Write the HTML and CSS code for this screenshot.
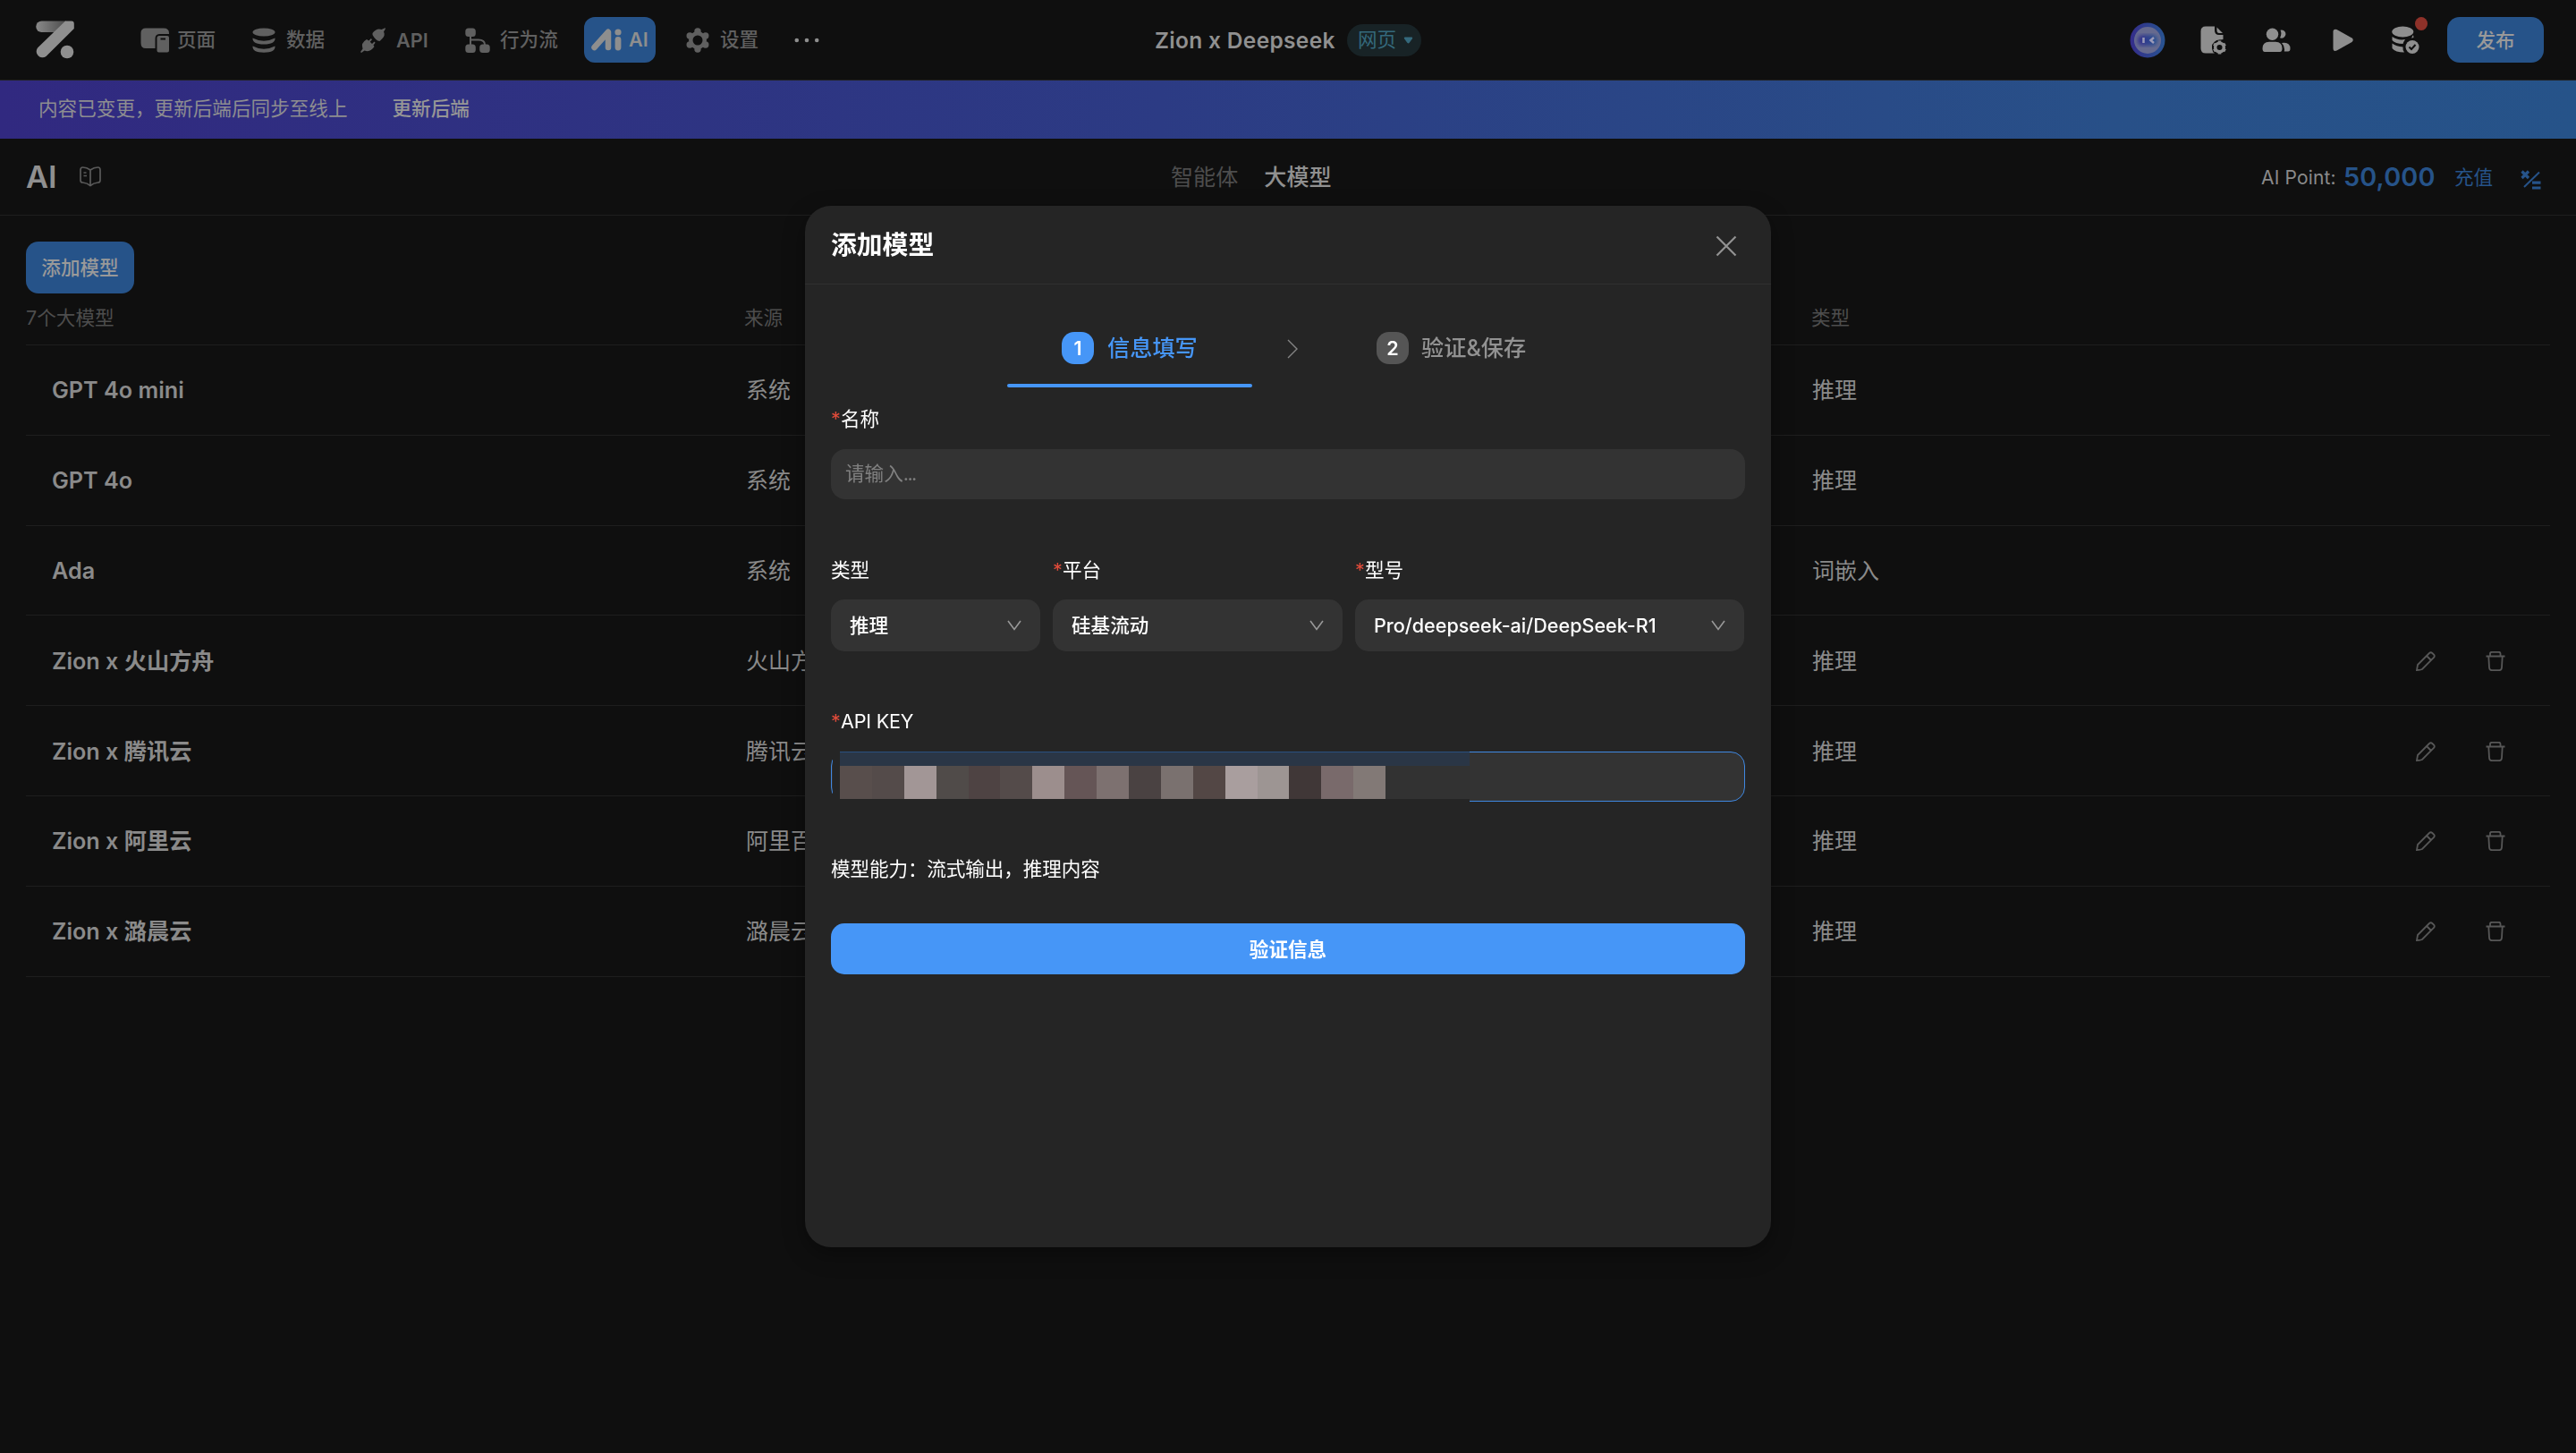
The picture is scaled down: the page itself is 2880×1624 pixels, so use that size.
FILE: index.html
```
<!DOCTYPE html>
<html lang="zh-CN">
<head>
    <meta charset="UTF-8">
    <meta name="viewport" content="width=device-width, initial-scale=1.0">
    <title>Zion x Deepseek</title>
    <link rel="stylesheet" href="styles.css">
</head>
<body>
    <svg class="sprite">
        <symbol id="pencil" viewBox="0 0 22 22">
            <path d="M1 21L2 15L15 2Q16.700 0.500 18.300 2L20 3.700Q21.500 5.300 20 7L7 20Q5 21 1 21ZM12 5L17 10"/>
        </symbol>
        <symbol id="trash" viewBox="0 0 22 22">
            <path d="M0.500 5.500H21.500M5 5.500V2.500Q5 0.800 7 0.800H14.500Q16.500 0.800 16.500 2.500V5.500M3.300 5.500L4 18Q4.200 21.200 7 21.200H15Q17.800 21.200 18 18L18.700 5.500"/>
        </symbol>
    </svg>

    <header class="topbar">
        <svg class="logo" viewBox="0 0 43 43">
            <defs>
                <linearGradient id="logoFade" x1="0" x2="1">
                    <stop offset="0" stop-color="#8a8a8a"/>
                    <stop offset="1" stop-color="#4c4c4c"/>
                </linearGradient>
            </defs>
            <path d="M6.500 0.500H34L22 13H6.500A6.200 6.200 0 0 1 6.500 0.500Z" fill="url(#logoFade)"/>
            <path d="M33 0.500H40Q42.800 0.500 42.800 3.500V9L11.500 40A6.800 6.800 0 0 1 2 30.500Z" fill="#8f8f8f"/>
            <circle cx="35" cy="35" r="7.300" fill="#8f8f8f"/>
        </svg>
        <nav class="nav">
            <div class="nav-item nav-page">
                <svg width="33" height="28" viewBox="0 0 33 28"><path d="M6 0.500H26Q32 0.500 32 6V7H21Q16.500 7.500 16.500 12V23H6Q0.500 23 0.500 17V6Q0.500 0.500 6 0.500Z"/><path fill-rule="evenodd" d="M21 9H30Q32 9 32 11V25.500Q32 27.500 30 27.500H20.500Q18.500 27.500 18.500 25.500V11.500Q18.500 9 21 9ZM22.500 11.500V13.500H28V11.500Z"/></svg>
                <span>页面</span>
            </div>
            <div class="nav-item nav-data">
                <svg width="26" height="28" viewBox="0 0 26 28"><ellipse cx="13" cy="5" rx="12.500" ry="4.500"/><path d="M0.500 11.500Q13 18 25.500 11.500Q26 18.500 13 18.500Q0 18.500 0.500 11.500ZM0.500 20.500Q13 27 25.500 20.500Q26 27.700 13 27.700Q0 27.700 0.500 20.500Z"/></svg>
                <span>数据</span>
            </div>
            <div class="nav-item nav-api">
                <svg width="28" height="28" viewBox="0 0 28 28"><path d="M27.500 0.300L28 1L26 4.500Q28 8.500 24.500 12L21.500 15Q17 14.500 13.500 8L13.500 6Q18 0 23.500 2ZM7 13L9.300 14.500L11.800 12L13 13.200L10.700 15.700L13 18L15.500 15.500L16.600 16.800L14.500 19.500L15.500 21Q11 28 4.500 25.500L1 28L0 27L2.500 23.500Q0 17 7 13Z"/></svg>
                <span>API</span>
            </div>
            <div class="nav-item nav-flow">
                <svg width="28" height="28" viewBox="0 0 28 28"><rect x="0.300" y="0.500" width="11.500" height="9.500" rx="3.500"/><rect x="0.300" y="18.500" width="11.500" height="9.500" rx="3.500"/><rect x="16.200" y="18.500" width="11.500" height="9.500" rx="3.500"/><path class="line" d="M6 9V19M6 13.500H15Q22 13.500 22 19"/></svg>
                <span>行为流</span>
            </div>
            <div class="nav-item nav-ai active">
                <svg width="34" height="25" viewBox="0 0 34 25"><path class="thick" d="M3.500 21L19 3.800V21"/><circle cx="30" cy="4" r="3.600"/><rect x="26.600" y="9" width="6.800" height="15.500" rx="3.400"/></svg>
                <span>AI</span>
            </div>
            <div class="nav-item nav-setting">
                <svg width="26" height="28" viewBox="0 0 26 28"><circle class="ring" cx="13" cy="14" r="8.500"/><circle cx="13" cy="4" r="3.700"/><circle cx="21.800" cy="9" r="3.700"/><circle cx="21.800" cy="19" r="3.700"/><circle cx="13" cy="24" r="3.700"/><circle cx="4.200" cy="19" r="3.700"/><circle cx="4.200" cy="9" r="3.700"/><circle class="hole" cx="13" cy="14" r="5.500"/></svg>
                <span>设置</span>
            </div>
            <svg class="more" width="28" height="6" viewBox="0 0 28 6"><circle cx="2.800" cy="3" r="2.300"/><circle cx="14" cy="3" r="2.300"/><circle cx="25.200" cy="3" r="2.300"/></svg>
        </nav>
        <div class="project">
            <span class="project-name">Zion x Deepseek</span>
            <div class="platform"><span>网页</span><svg width="11" height="8" viewBox="0 0 10 8"><path d="M1 0.500H9Q10.300 1 9.300 2.500L6.200 6.800Q5 8 3.800 6.800L0.700 2.500Q-0.300 1 1 0.500Z"/></svg></div>
        </div>
        <div class="tools">
            <svg class="robot" width="40" height="40" viewBox="0 0 40 40">
                <defs>
                    <linearGradient id="ring" x1="0" x2="1">
                        <stop offset="0" stop-color="#342c8a"/>
                        <stop offset="1" stop-color="#285491"/>
                    </linearGradient>
                    <filter id="soft"><feGaussianBlur stdDeviation="2"/></filter>
                </defs>
                <circle cx="20" cy="20" r="19.500" fill="url(#ring)"/>
                <circle cx="20" cy="20" r="15" fill="#666a8f"/>
                <rect x="9" y="14" width="22" height="12" rx="5.500" fill="url(#ring)" filter="url(#soft)"/>
                <path d="M15.500 17V23M27 17L23.500 20L27 23" fill="none" stroke="#9b9bb8" stroke-width="2.500"/>
            </svg>
            <svg class="doc" width="30" height="32" viewBox="0 0 30 32"><path d="M6 0.500H16V5Q16 10 21 10H25.500V15L20 16L13 21L14 29L16 30.500H6Q0.500 30.500 0.500 25V6Q0.500 0.500 6 0.500ZM18.500 1.500L25 8H21Q18.500 8 18.500 5Z"/><circle class="gap" cx="21.500" cy="24" r="8.500"/><circle class="cog" cx="21.500" cy="24" r="4.800"/><path class="teeth" d="M21.500 16.500V18.500M21.500 29.500V31.500M15 20.300L16.800 21.300M26.200 26.700L28 27.700M28 20.300L26.200 21.300M16.800 26.700L15 27.700"/></svg>
            <svg class="people" width="32" height="28" viewBox="0 0 32 28"><circle cx="11.500" cy="7.200" r="6.700"/><path d="M20.500 2.700A4.600 4.600 0 1 1 20 11.300Q22.500 6.500 20.500 2.700ZM0.500 23Q0.500 16 8 15.700H15Q22.500 16 22.500 23Q22.500 27 20 27H3Q0.500 27 0.500 23ZM22 17Q31.500 15.500 31.500 23.500Q31.500 26.500 29 26.500H24.800Q26 21 22 17Z"/></svg>
            <svg class="play" width="24" height="26" viewBox="0 0 24 26"><path d="M4.500 1L21.500 10.500Q24 12.500 21.500 15L4.500 24.500Q0.500 26 0.500 22V3.500Q0.500 0 4.500 1Z"/></svg>
            <div class="sync">
                <svg width="31" height="32" viewBox="0 0 31 32"><ellipse cx="12.300" cy="6.500" rx="12" ry="6"/><path d="M0.500 12Q7 16.500 15 15Q13 18 12.500 20Q4 20 0.500 16ZM0.500 19.500Q5 23 12.500 23.500Q12 27 14 29.500Q4 29.500 0.500 25ZM24 10L24.500 13L22 13.500Z"/><circle cx="23" cy="23.500" r="7.500"/><path class="check" d="M19.500 23.500L22 26L26.500 21"/></svg>
                <i class="dot"></i>
            </div>
            <button class="publish">发布</button>
        </div>
    </header>

    <div class="notice">
        <span>内容已变更，更新后端后同步至线上</span>
        <b>更新后端</b>
    </div>

    <div class="titlebar">
        <div class="page-title">
            <h1>AI</h1>
            <svg width="24" height="23" viewBox="0 0 24 23"><path d="M12 4Q8 1 3.500 1Q1 1 1 4V15.500Q1 18 3.500 18Q8.500 18.500 12 21.500Q15.500 18.500 20.500 18Q23 18 23 15.500V4Q23 1 20.500 1Q16 1 12 4ZM12 4V21.500M4.500 7H7.500M4.500 10.500H8"/></svg>
        </div>
        <div class="tabs">
            <span>智能体</span>
            <span class="active">大模型</span>
        </div>
        <div class="points">
            <span class="points-label">AI Point:</span>
            <span class="points-value">50,000</span>
            <span class="recharge">充值</span>
            <svg width="24" height="22" viewBox="0 0 24 22"><path class="bold" d="M1.500 1.500L9 9M9 1.500L1.500 9M13 14.200H22.500M13 20H22.500"/><path d="M21 2.500L4 19"/></svg>
        </div>
    </div>

    <main class="models">
        <button class="add">添加模型</button>
        <div class="row head"><span>7个大模型</span><span>来源</span><span>类型</span></div>
        <div class="row"><b>GPT 4o mini</b><span>系统</span><span>推理</span></div>
        <div class="row"><b>GPT 4o</b><span>系统</span><span>推理</span></div>
        <div class="row"><b>Ada</b><span>系统</span><span>词嵌入</span></div>
        <div class="row"><b>Zion x 火山方舟</b><span>火山方舟</span><span>推理</span><div class="actions"><svg><use href="#pencil"/></svg><svg><use href="#trash"/></svg></div></div>
        <div class="row"><b>Zion x 腾讯云</b><span>腾讯云</span><span>推理</span><div class="actions"><svg><use href="#pencil"/></svg><svg><use href="#trash"/></svg></div></div>
        <div class="row"><b>Zion x 阿里云</b><span>阿里百炼</span><span>推理</span><div class="actions"><svg><use href="#pencil"/></svg><svg><use href="#trash"/></svg></div></div>
        <div class="row"><b>Zion x 潞晨云</b><span>潞晨云</span><span>推理</span><div class="actions"><svg><use href="#pencil"/></svg><svg><use href="#trash"/></svg></div></div>
    </main>

    <div class="mask">
        <div class="modal">
            <div class="modal-head">
                <h2>添加模型</h2>
                <svg width="24" height="24" viewBox="0 0 24 24"><path d="M1.500 1.500L22.500 22.500M22.500 1.500L1.500 22.500"/></svg>
            </div>
            <div class="modal-body">
                <div class="steps">
                    <div class="step current"><i>1</i><span>信息填写</span></div>
                    <svg width="14" height="22" viewBox="0 0 14 22"><path d="M2 1L12 11L2 21"/></svg>
                    <div class="step"><i>2</i><span>验证&amp;保存</span></div>
                </div>

                <label><em>*</em>名称</label>
                <div class="input">请输入<span class="dots">...</span></div>

                <div class="fields">
                    <div class="field">
                        <label>类型</label>
                        <div class="select"><span>推理</span><svg viewBox="0 0 16 12"><path d="M1 1L8 10.500L15 1"/></svg></div>
                    </div>
                    <div class="field">
                        <label><em>*</em>平台</label>
                        <div class="select"><span>硅基流动</span><svg viewBox="0 0 16 12"><path d="M1 1L8 10.500L15 1"/></svg></div>
                    </div>
                    <div class="field">
                        <label><em>*</em>型号</label>
                        <div class="select"><span class="model-id">Pro/deepseek-ai/DeepSeek-R1</span><svg viewBox="0 0 16 12"><path d="M1 1L8 10.500L15 1"/></svg></div>
                    </div>
                </div>

                <label class="key-label"><em>*</em>API KEY</label>
                <div class="input focus">
                    <div class="mosaic">
                        <div class="mosaic-top"></div>
                        <div class="blocks">
                            <i class="c1"></i><i class="c2"></i><i class="c3"></i><i class="c4"></i><i class="c5"></i><i class="c2"></i><i class="c6"></i><i class="c7"></i><i class="c8"></i><i class="c9"></i><i class="c10"></i><i class="c11"></i><i class="c12"></i><i class="c13"></i><i class="c14"></i><i class="c15"></i><i class="c16"></i>
                        </div>
                    </div>
                </div>

                <p class="ability">模型能力：流式输出，推理内容</p>
                <button class="verify">验证信息</button>
            </div>
        </div>
    </div>
</body>
</html>
```
FILE: styles.css
```
* {
    box-sizing: border-box;
}
body {
    margin: 0;
    height: 1624px;
    overflow: hidden;
    background: #0f0f0f;
    color: #8a8a8a;
    font-family: Inter, "Noto Sans CJK SC", sans-serif;
    font-size: 21.6px;
    line-height: 30px;
}
svg {
    display: block;
    flex: none;
    fill: none;
}
button {
    border: none;
    padding: 0 0 3px;
    font-family: inherit;
    font-size: 21.6px;
    font-weight: 500;
}
h1, h2, p {
    margin: 0;
}
i, em {
    font-style: normal;
}
span, b, label {
    white-space: nowrap;
}
.sprite {
    display: none;
}

/* top bar */
.topbar {
    display: grid;
    grid-template-columns: 1291px 1fr 499px;
    align-items: center;
    height: 90px;
    border-bottom: 1px solid #222;
}
.logo {
    width: 43px;
    height: 43px;
    margin-left: 40px;
    grid-area: 1 / 1;
}
.nav {
    grid-area: 1 / 1;
    display: flex;
    align-items: center;
    padding-left: 157px;
}
.nav-item {
    display: flex;
    align-items: center;
    flex: none;
    color: #606060;
    font-weight: 500;
}
.nav-item span {
    padding-bottom: 2px;
}
.nav-item svg, .more {
    fill: currentColor;
}
.nav-item .line {
    fill: none;
    stroke: currentColor;
    stroke-width: 2;
}
.nav-item .thick {
    fill: none;
    stroke: currentColor;
    stroke-width: 6.5;
    stroke-linecap: round;
    stroke-linejoin: round;
}
.nav-item .ring {
    stroke: currentColor;
    stroke-width: 3;
}
.nav-item .hole {
    fill: #0f0f0f;
}
.nav-page {
    width: 125px;
    gap: 8px;
}
.nav-data {
    width: 121px;
    gap: 12px;
}
.nav-api {
    width: 117px;
    gap: 12px;
    font-weight: 600;
}
.nav-api span {
    padding-bottom: 0;
}
.nav-flow {
    width: 133px;
    gap: 11px;
}
.nav-ai {
    width: 80px;
    height: 51px;
    padding-left: 8px;
    gap: 8px;
    border-radius: 12px;
    background: #265389;
    font-weight: 600;
}
.nav-ai span {
    padding-bottom: 1px;
}
.nav-ai.active {
    color: #8e8e8e;
}
.nav-setting {
    width: 121px;
    margin-left: 34px;
    gap: 12px;
}
.more {
    color: #8e8e8e;
}
.project {
    grid-area: 1 / 2;
    display: flex;
    align-items: center;
}
.project-name {
    width: 215px;
    font-size: 24.5px;
    font-weight: 600;
    letter-spacing: 0.32px;
    color: #909090;
}
.platform {
    display: flex;
    align-items: center;
    gap: 8px;
    width: 83px;
    height: 36px;
    padding-left: 12px;
    border-radius: 18px;
    background: #182326;
    color: #34697c;
}
.platform span {
    padding-bottom: 2px;
}
.platform svg {
    fill: currentColor;
}
.tools {
    grid-area: 1 / 3;
    display: flex;
    align-items: center;
}
.tools svg:not(.robot) {
    fill: #8e8e8e;
}
.doc {
    margin-left: 39px;
}
.tools .gap {
    fill: #0f0f0f;
}
.tools .cog {
    fill: none;
    stroke: #8e8e8e;
    stroke-width: 3.5;
}
.tools .teeth {
    stroke: #8e8e8e;
    stroke-width: 3.5;
}
.people {
    margin-left: 39px;
}
.play {
    margin-left: 47px;
}
.sync {
    position: relative;
    margin-left: 42px;
}
.sync .check {
    fill: none;
    stroke: #0f0f0f;
    stroke-width: 2;
}
.dot {
    position: absolute;
    left: 26px;
    top: -10px;
    width: 14px;
    height: 15px;
    border-radius: 50%;
    background: #8e3129;
}
.publish {
    width: 108px;
    height: 51px;
    margin-left: 31px;
    border-radius: 14px;
    background: #265389;
    color: #999;
}

/* notice */
.notice {
    display: flex;
    align-items: center;
    gap: 50px;
    height: 65px;
    padding: 0 0 3px 43px;
    background: linear-gradient(90deg, #312980, #2c3b84 45%, #285088 82%, #265389);
    color: #8d8d90;
}
.notice b {
    font-weight: 500;
    color: #969696;
}

/* title bar */
.titlebar {
    display: grid;
    grid-template-columns: 1309px 1fr 352px;
    align-items: center;
    height: 86px;
    border-bottom: 1px solid #1e1e1e;
}
.page-title {
    display: flex;
    align-items: center;
    padding-left: 29px;
}
.page-title h1 {
    width: 60px;
    padding-top: 1px;
    font-size: 34.5px;
    font-weight: 600;
    line-height: 40px;
    color: #909090;
}
.page-title svg {
    stroke: #5a5a5a;
    stroke-width: 1.7;
}
.tabs {
    display: flex;
    gap: 29px;
    padding-top: 1px;
    font-size: 25.1px;
    color: #4d4d4d;
}
.tabs .active {
    font-weight: 500;
    color: #909090;
}
.points {
    display: flex;
    align-items: center;
}
.points-label {
    width: 92px;
    padding-top: 3px;
    font-size: 21px;
    letter-spacing: 0.15px;
}
.points-value {
    width: 124px;
    font-size: 28.8px;
    font-weight: 600;
    letter-spacing: 0.15px;
    color: #265389;
}
.recharge {
    width: 74px;
    color: #265389;
}
.points svg {
    stroke: #265389;
    stroke-width: 2;
    margin-top: 6px;
}
.points .bold {
    stroke-width: 3.2;
}

/* model table */
.models {
    padding: 29px;
}
.add {
    display: block;
    width: 121px;
    height: 58px;
    border-radius: 14px;
    background: #265389;
    color: #999;
}
.row {
    display: grid;
    grid-template-columns: 776px 1192px 675px auto;
    align-items: center;
    height: 100.8px;
    padding: 1px 0 0 29px;
    border-bottom: 1px solid #1e1e1e;
    font-size: 25px;
}
.row b {
    font-size: 25.2px;
    font-weight: 600;
}
.row.head {
    grid-template-columns: 803px 1193px 1fr;
    height: 58px;
    padding: 0 0 4px;
    font-size: 21.6px;
    color: #4d4d4d;
}
.actions {
    display: flex;
    gap: 56px;
}
.actions svg {
    width: 22px;
    height: 22px;
    stroke: #575757;
    stroke-width: 1.8;
}

/* dialog */
.mask {
    position: fixed;
    inset: 0;
    display: flex;
    justify-content: center;
    align-items: flex-start;
    padding-top: 230px;
}
.modal {
    width: 1080px;
    height: 1164px;
    border-radius: 29px;
    background: #252525;
    color: #fff;
    box-shadow: 0 8px 24px rgba(0, 0, 0, 0.35);
}
.modal-head {
    display: flex;
    align-items: center;
    justify-content: space-between;
    height: 88px;
    padding: 1px 38px 0 29px;
    border-bottom: 1px solid #303030;
}
.modal-head h2 {
    font-size: 28.8px;
    font-weight: 600;
}
.modal-head svg {
    margin-top: 1px;
    stroke: #929292;
    stroke-width: 2.2;
}
.modal-body {
    padding: 30px 29px;
}
.steps {
    display: flex;
    align-items: center;
    height: 85px;
    margin-left: 197px;
}
.steps svg {
    margin: 0 39px 1px 38px;
    stroke: #848484;
    stroke-width: 1.4;
}
.step {
    display: flex;
    align-items: center;
    gap: 15px;
    width: 274px;
    height: 85px;
    padding-left: 61px;
    font-size: 25.2px;
    font-weight: 500;
    color: #929292;
    border-bottom: 4px solid transparent;
}
.step:last-child {
    padding-left: 48px;
    gap: 14px;
}
.step span {
    padding-top: 1px;
}
.step i {
    width: 36px;
    height: 36px;
    border-radius: 14px;
    background: #555;
    color: #fff;
    font-size: 21.6px;
    font-weight: 600;
    line-height: 37px;
    text-align: center;
}
.step.current {
    color: #4696f7;
    position: relative;
}
.step.current::after {
    content: "";
    position: absolute;
    left: 0;
    bottom: -4px;
    width: 274px;
    height: 4px;
    border-radius: 2px;
    background: #4696f7;
}
.step.current i {
    background: #4696f7;
}
label {
    display: block;
    height: 30px;
    margin-top: 20px;
}
label em {
    display: inline-block;
    width: 11px;
    color: #e04b3a;
}
.input {
    height: 56px;
    margin-top: 19px;
    padding-left: 16px;
    border-radius: 16px;
    background: #333;
    color: #808080;
    line-height: 54px;
}
.input .dots {
    letter-spacing: -1.6px;
}
.fields {
    display: grid;
    grid-template-columns: 234px 324px 435px;
    gap: 14px;
    margin-top: 64px;
}
.field label {
    margin-top: 0;
}
.select {
    display: flex;
    align-items: center;
    justify-content: space-between;
    height: 58px;
    margin-top: 18px;
    padding: 0 21px;
    border-radius: 15px;
    background: #333;
    font-weight: 500;
}
.select svg {
    width: 16px;
    height: 12px;
    stroke: #999;
    stroke-width: 1.6;
}
.select .model-id {
    letter-spacing: -0.02px;
}
.key-label {
    margin-top: 63px;
    letter-spacing: -0.2px;
}
.input.focus {
    position: relative;
    margin-top: 19px;
    border: 1px solid #3f88e2;
}
/* censored key, laid over the input */
.mosaic {
    position: absolute;
    left: 1px;
    top: -1px;
    width: 712px;
    height: 68px;
    padding-left: 8px;
    background: #252525;
}
.mosaic-top {
    height: 16px;
    background: #2a3646;
    border-top: 1px solid #2a5080;
}
.blocks {
    display: flex;
    height: 37px;
    background: #323232;
}
.blocks i {
    width: 35.9px;
}
.c1 { background: #584e4c; }
.c2 { background: #544b4a; }
.c3 { background: #a29696; }
.c4 { background: #504b49; }
.c5 { background: #4e4343; }
.c6 { background: #9c8e8d; }
.c7 { background: #655556; }
.c8 { background: #7d7170; }
.c9 { background: #4a4242; }
.c10 { background: #7a716f; }
.c11 { background: #534745; }
.c12 { background: #a99e9e; }
.c13 { background: #9d9593; }
.c14 { background: #403737; }
.c15 { background: #796a6b; }
.c16 { background: #827976; }
.ability {
    margin-top: 60px;
    letter-spacing: -0.12px;
}
.verify {
    display: block;
    width: 100%;
    height: 57px;
    margin-top: 46px;
    border-radius: 15px;
    background: #4696f7;
    color: #fff;
    font-weight: 600;
}
```
